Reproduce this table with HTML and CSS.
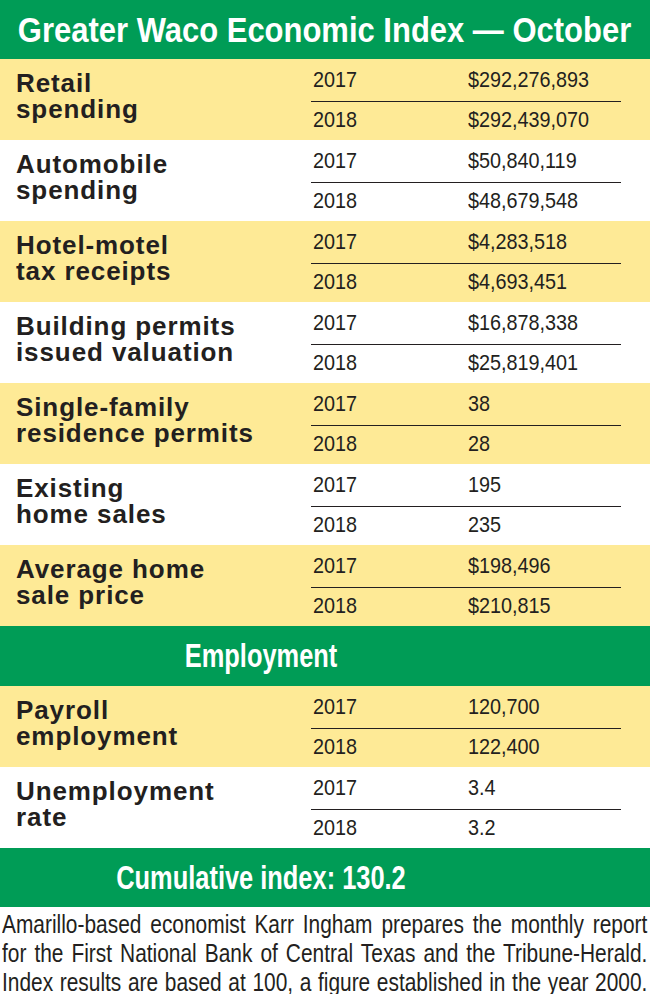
FILE: index.html
```html
<!DOCTYPE html>
<html>
<head>
<meta charset="utf-8">
<link rel="stylesheet" href="styles.css">
</head>
<body>
<div class="graphic">
  <div class="banner title"><span class="cond">Greater Waco Economic Index — October</span></div>

  <div class="row yellow">
    <div class="label">Retail<br>spending</div>
    <div class="data">
      <div class="sub"><span class="num">2017</span><span class="num">$292,276,893</span></div>
      <div class="sub"><span class="num">2018</span><span class="num">$292,439,070</span></div>
    </div>
  </div>
  <div class="row">
    <div class="label">Automobile<br>spending</div>
    <div class="data">
      <div class="sub"><span class="num">2017</span><span class="num">$50,840,119</span></div>
      <div class="sub"><span class="num">2018</span><span class="num">$48,679,548</span></div>
    </div>
  </div>
  <div class="row yellow">
    <div class="label">Hotel-motel<br>tax receipts</div>
    <div class="data">
      <div class="sub"><span class="num">2017</span><span class="num">$4,283,518</span></div>
      <div class="sub"><span class="num">2018</span><span class="num">$4,693,451</span></div>
    </div>
  </div>
  <div class="row">
    <div class="label">Building permits<br>issued valuation</div>
    <div class="data">
      <div class="sub"><span class="num">2017</span><span class="num">$16,878,338</span></div>
      <div class="sub"><span class="num">2018</span><span class="num">$25,819,401</span></div>
    </div>
  </div>
  <div class="row yellow">
    <div class="label">Single-family<br>residence permits</div>
    <div class="data">
      <div class="sub"><span class="num">2017</span><span class="num">38</span></div>
      <div class="sub"><span class="num">2018</span><span class="num">28</span></div>
    </div>
  </div>
  <div class="row">
    <div class="label">Existing<br>home sales</div>
    <div class="data">
      <div class="sub"><span class="num">2017</span><span class="num">195</span></div>
      <div class="sub"><span class="num">2018</span><span class="num">235</span></div>
    </div>
  </div>
  <div class="row yellow">
    <div class="label">Average home<br>sale price</div>
    <div class="data">
      <div class="sub"><span class="num">2017</span><span class="num">$198,496</span></div>
      <div class="sub"><span class="num">2018</span><span class="num">$210,815</span></div>
    </div>
  </div>

  <div class="banner section"><span class="cond">Employment</span></div>

  <div class="row yellow">
    <div class="label">Payroll<br>employment</div>
    <div class="data">
      <div class="sub"><span class="num">2017</span><span class="num">120,700</span></div>
      <div class="sub"><span class="num">2018</span><span class="num">122,400</span></div>
    </div>
  </div>
  <div class="row">
    <div class="label">Unemployment<br>rate</div>
    <div class="data">
      <div class="sub"><span class="num">2017</span><span class="num">3.4</span></div>
      <div class="sub"><span class="num">2018</span><span class="num">3.2</span></div>
    </div>
  </div>

  <div class="banner section cumulative"><span class="cond">Cumulative index: 130.2</span></div>

  <div class="note-wrap">
    <p class="note">Amarillo-based economist Karr Ingham prepares the monthly report<br>for the First National Bank of Central Texas and the Tribune-Herald.<br>Index results are based at 100, a figure established in the year 2000.</p>
  </div>
</div>
</body>
</html>
```

FILE: styles.css
```css
html, body {
  margin: 0;
  padding: 0;
  background: #ffffff;
}

.graphic {
  width: 650px;
  overflow: hidden;
  color: #231f20;
  font-family: "Liberation Sans", Arial, sans-serif;
}

.banner {
  background: #009c56;
  color: #ffffff;
  font-weight: bold;
  display: flex;
  align-items: center;
  justify-content: center;
  white-space: nowrap;
}

.cond {
  display: inline-block;
  transform: scaleX(0.8);
  transform-origin: center;
}

.title {
  height: 59px;
  font-size: 35px;
}

.title .cond {
  transform: scaleX(0.885);
}

.section {
  height: 60px;
  padding-right: 128px;
  font-size: 33px;
}

.section .cond {
  transform: scaleX(0.77);
}

.cumulative {
  height: 59px;
}

.row {
  height: 81px;
  display: grid;
  grid-template-columns: 295px 310px;
  padding-left: 16px;
  background: #ffffff;
}

.row.yellow {
  background: #feea96;
}

.label {
  font-weight: bold;
  font-size: 26px;
  line-height: 26px;
  letter-spacing: 0.9px;
  padding-top: 11px;
}

.data {
  display: grid;
  grid-template-rows: 43px 38px;
}

.sub {
  display: grid;
  grid-template-columns: 155px 1fr;
  align-items: center;
  padding-left: 2px;
  font-size: 22px;
}

.sub:first-child {
  border-bottom: 1px solid #231f20;
}

.sub:last-child {
  padding-bottom: 3px;
}

.num {
  display: inline-block;
  justify-self: start;
  transform: scaleX(0.9);
  transform-origin: left center;
}

.note-wrap {
  height: 87px;
  padding-top: 3px;
  box-sizing: border-box;
}

.note {
  margin: 0 0 0 2px;
  width: 772px;
  font-size: 25px;
  line-height: 29px;
  text-align: justify;
  text-align-last: justify;
  white-space: nowrap;
  transform: scaleX(0.836);
  transform-origin: left top;
}
```
